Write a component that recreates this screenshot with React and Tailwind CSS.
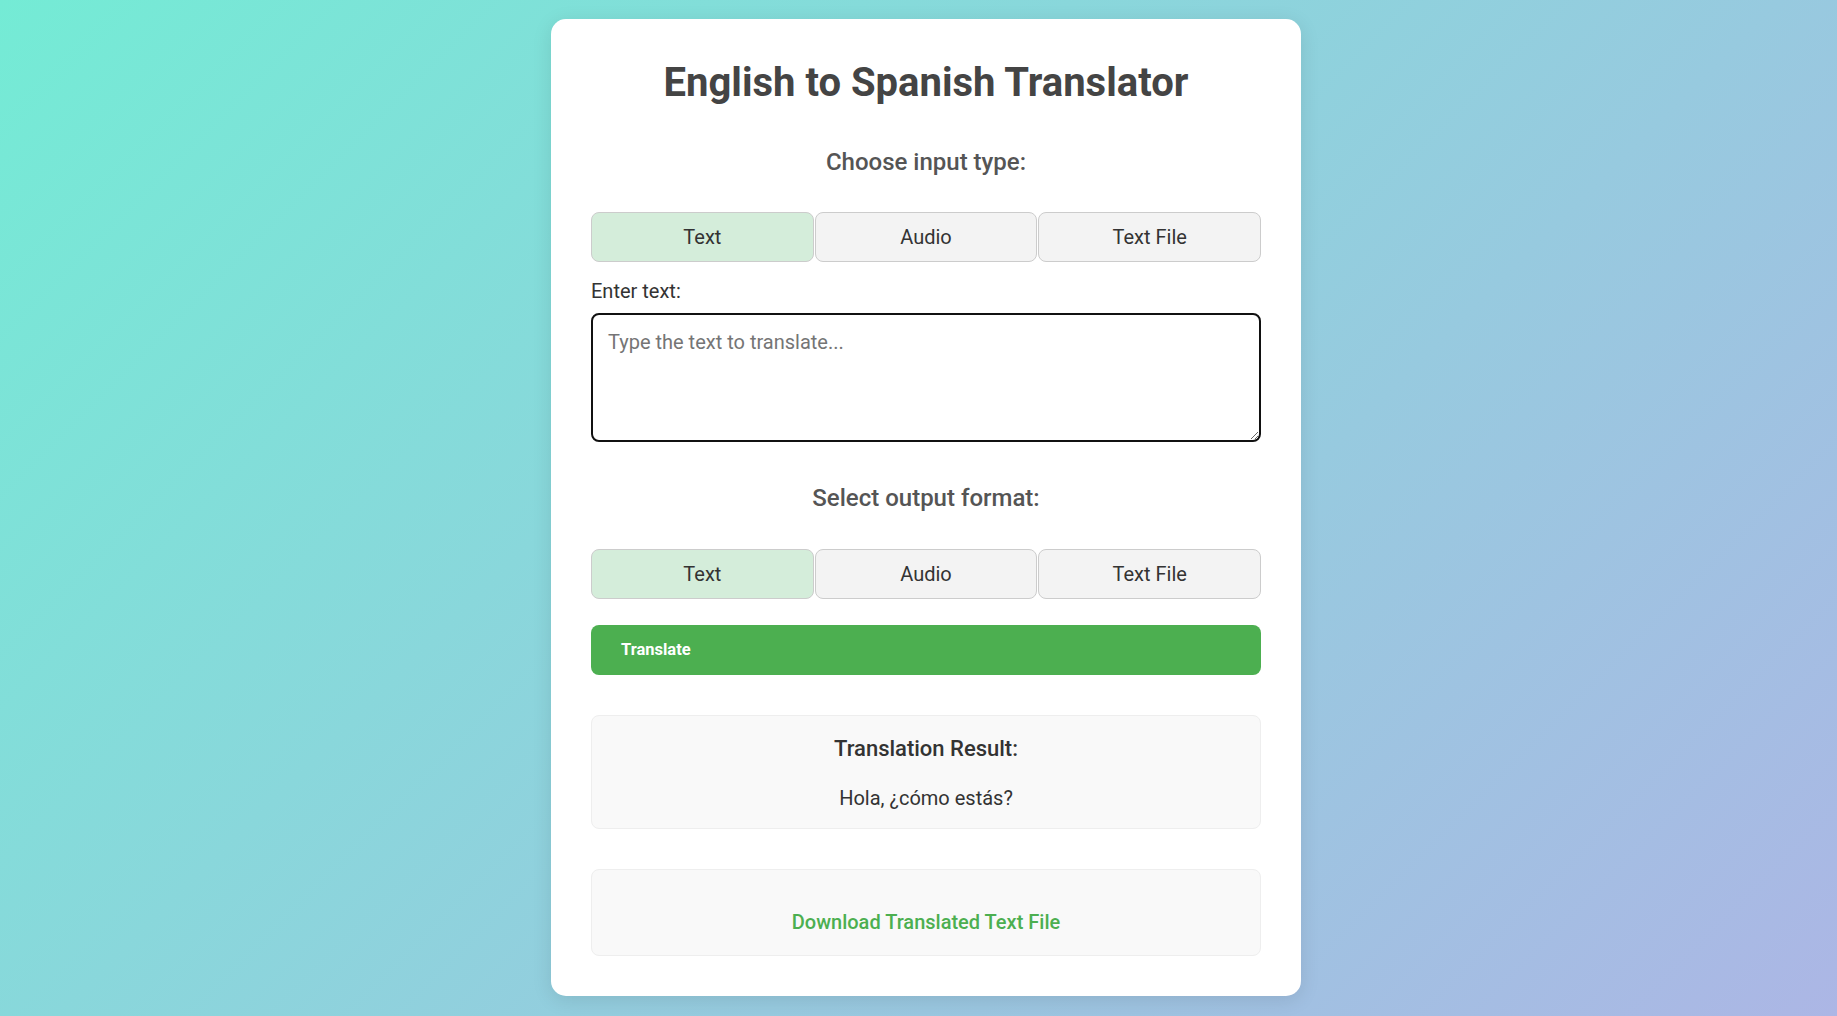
import React, { useState } from "react";

const OPTIONS = ["Text", "Audio", "Text File"];

function OptionRow({ value, onChange }) {
  return (
    <div className="flex gap-[1px]">
      {OPTIONS.map((opt) => (
        <button
          key={opt}
          type="button"
          onClick={() => onChange(opt)}
          className={
            "h-[50px] flex-1 rounded-[8px] border border-[#cccccc] text-[20px] text-[#333] " +
            (value === opt ? "bg-[#d4edda]" : "bg-[#f3f3f3]")
          }
        >
          {opt}
        </button>
      ))}
    </div>
  );
}

export default function App() {
  const [inputType, setInputType] = useState("Text");
  const [outputType, setOutputType] = useState("Text");
  const [text, setText] = useState("");

  return (
    <div
      className="flex min-h-screen justify-center bg-[linear-gradient(135deg,#74ebd5,#acb6e5)] pb-[20px] pl-[15px] pt-[19px]"
      style={{ fontFamily: "Roboto, 'Liberation Sans', sans-serif" }}
    >
      <div className="w-[750px] rounded-[15px] bg-white px-10 pb-[39px] pt-10 shadow-[0_4px_20px_rgba(0,0,0,0.1)]">
        <h1 className="text-center text-[40px] font-bold leading-[48px] text-[#444]">
          English to Spanish Translator
        </h1>

        <h3 className="mt-[41px] text-center text-[24px] font-medium leading-[28px] text-[#555]">
          Choose input type:
        </h3>
        <div className="mt-[36px]">
          <OptionRow value={inputType} onChange={setInputType} />
        </div>

        <label className="mt-[18px] block text-[20px] leading-[22px] text-[#333]">Enter text:</label>
        <textarea
          value={text}
          onChange={(e) => setText(e.target.value)}
          placeholder="Type the text to translate..."
          className="mt-[11px] block h-[129px] w-full rounded-[8px] border-2 border-[#111] px-[15px] py-[12px] text-[20px] text-[#333] outline-none placeholder:text-[#757575]"
        />

        <h3 className="mt-[42px] text-center text-[24px] font-medium leading-[28px] text-[#555]">
          Select output format:
        </h3>
        <div className="mt-[37px]">
          <OptionRow value={outputType} onChange={setOutputType} />
        </div>

        <button
          type="button"
          className="mt-[26px] block h-[50px] w-full rounded-[8px] bg-[#4caf50] pl-[30px] text-left text-[16.5px] font-bold text-white"
        >
          Translate
        </button>

        <div className="mt-[40px] rounded-[8px] border border-[#eeeeee] bg-[#f9f9f9] pb-[18px] pt-[20px] text-center">
          <h3 className="text-[22px] font-medium leading-[26px] text-[#333]">Translation Result:</h3>
          <p className="mt-[24px] text-[20px] leading-[24px] text-[#333]">Hola, ¿cómo estás?</p>
        </div>

        <div className="mt-[40px] rounded-[8px] border border-[#eeeeee] bg-[#f9f9f9] pb-[19px] pt-[40px] text-center">
          <a href="#" className="text-[20px] font-medium leading-[24px] text-[#4caf50]">
            Download Translated Text File
          </a>
        </div>
      </div>
    </div>
  );
}
